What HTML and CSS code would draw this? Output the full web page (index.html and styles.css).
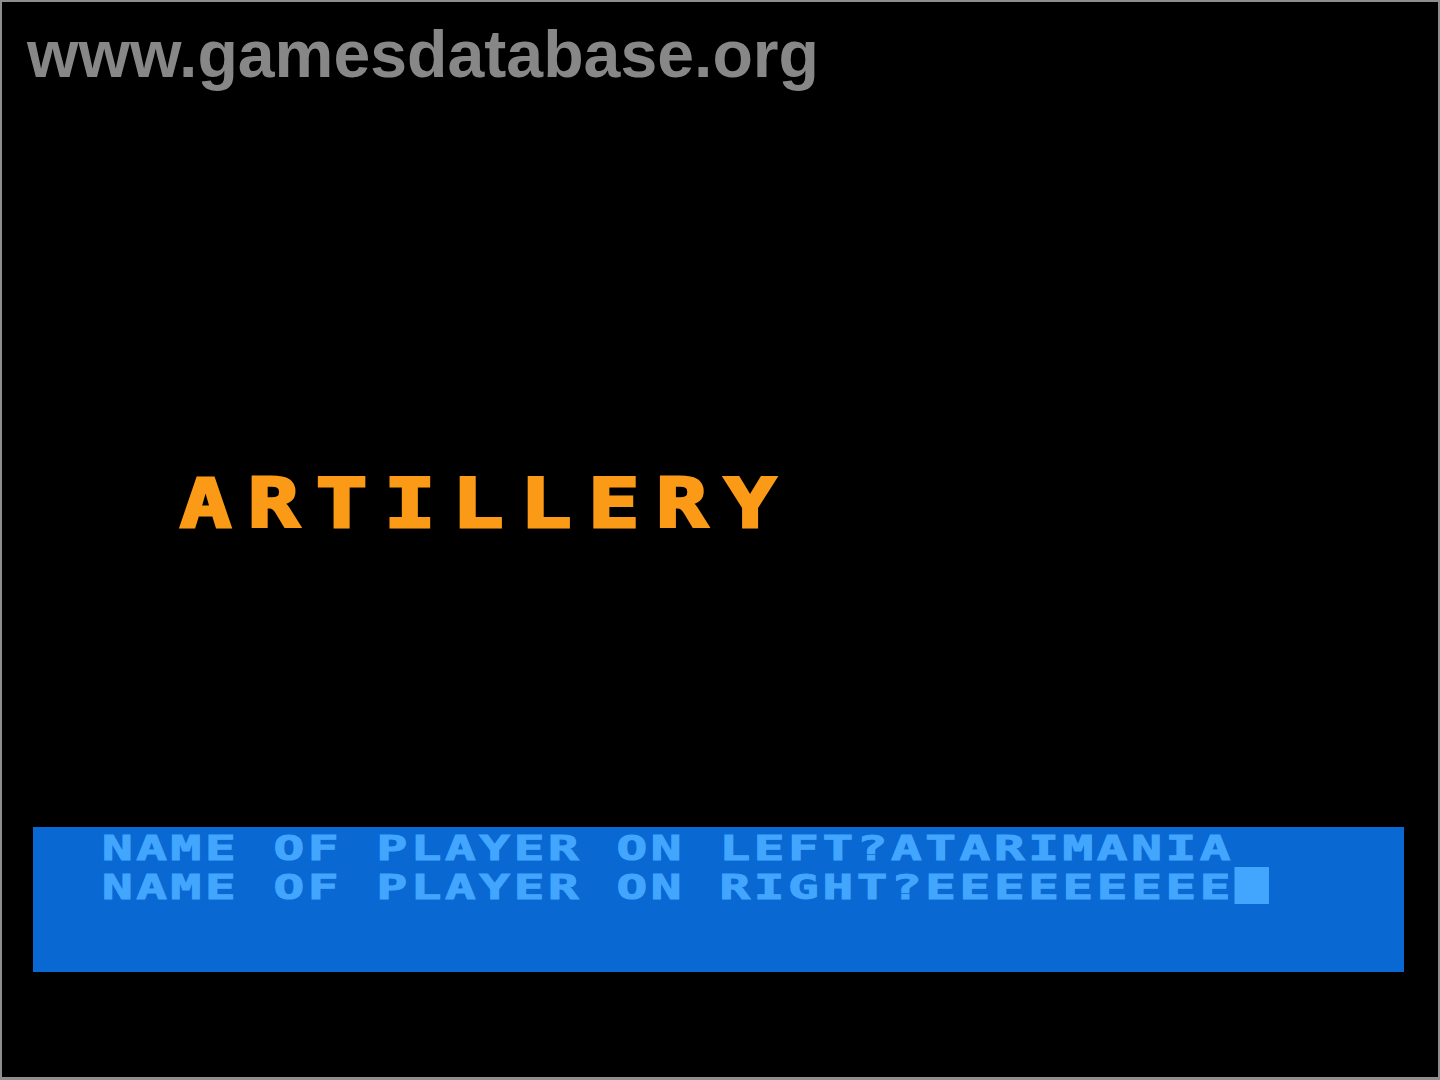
FILE: index.html
```html
<!DOCTYPE html>
<html>
<head>
<meta charset="utf-8">
<link rel="stylesheet" href="styles.css">
</head>
<body>
<div class="screen">
  <div class="watermark">www.gamesdatabase.org</div>
  <div class="title">ARTILLERY</div>
  <div class="textbox">
    <div class="line">NAME OF PLAYER ON LEFT?ATARIMANIA</div>
    <div class="line">NAME OF PLAYER ON RIGHT?EEEEEEEEE<span class="cursor"></span></div>
  </div>
</div>
</body>
</html>
```
FILE: styles.css
```css
html, body {
  margin: 0;
  padding: 0;
  background: #000;
}
.screen {
  box-sizing: border-box;
  width: 1440px;
  height: 1080px;
  background: #000;
  border: 2px solid #8e8e8e;
  border-bottom-width: 3px;
  display: flex;
  flex-direction: column;
  overflow: hidden;
}
.watermark {
  font-family: "Liberation Sans", Arial, sans-serif;
  font-weight: bold;
  font-size: 66.2px;
  line-height: 66px;
  color: #878787;
  padding: 19px 0 0 25px;
  height: 66px;
}
.title {
  font-family: "DejaVu Sans Mono", monospace;
  font-weight: bold;
  font-size: 68px;
  line-height: 71px;
  color: #fb9a16;
  -webkit-text-stroke: 3px #fb9a16;
  letter-spacing: 13.5px;
  transform: scaleX(1.25);
  transform-origin: left center;
  margin: 381px 0 0 178px;
  height: 71px;
}
.textbox {
  box-sizing: border-box;
  width: 1371px;
  height: 145px;
  margin: 288px 0 0 31px;
  background: #0a68d2;
  padding: 4px 0 0 69px;
}
.line {
  font-family: "DejaVu Sans Mono", monospace;
  font-weight: bold;
  font-size: 34px;
  line-height: 35.5px;
  height: 35.5px;
  color: #42a6ff;
  -webkit-text-stroke: 1px #42a6ff;
  letter-spacing: 2.4px;
  transform: scaleX(1.5);
  transform-origin: left center;
  white-space: pre;
}
.cursor {
  display: inline-block;
  width: 23.3px;
  height: 37px;
  background: #42a6ff;
  vertical-align: -5px;
}
```
